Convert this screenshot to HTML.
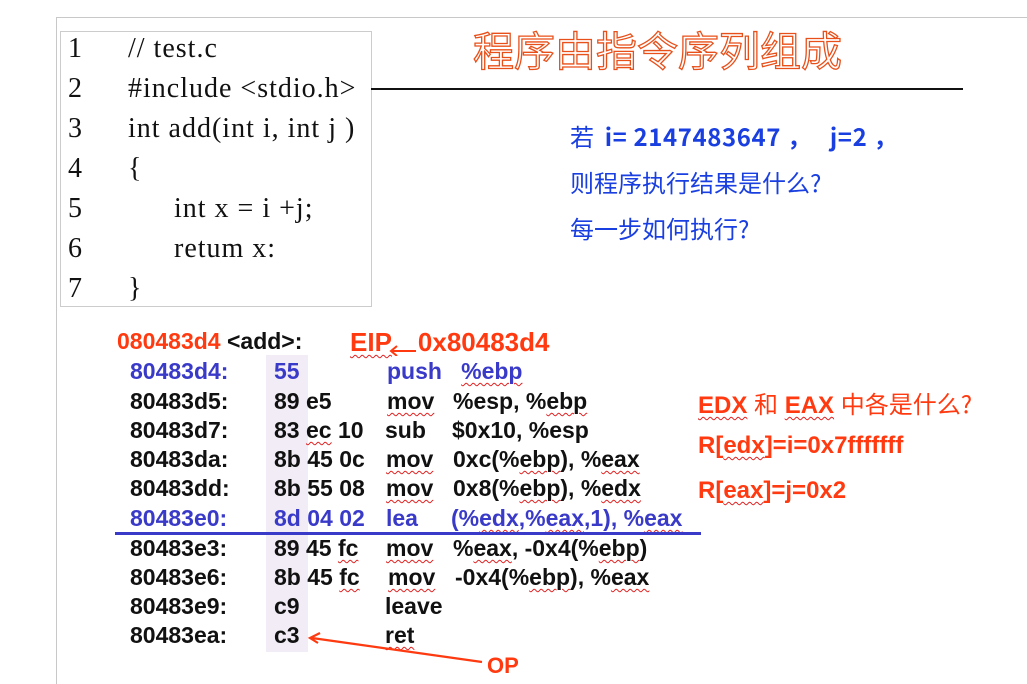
<!DOCTYPE html>
<html><head><meta charset="utf-8"><style>
body{margin:0;width:1027px;height:684px;background:#fff;position:relative;overflow:hidden;font-family:"Liberation Sans","Noto Sans CJK SC",sans-serif}
.a{position:absolute;white-space:nowrap;line-height:1}
.c{font-family:"Liberation Serif",serif;font-size:28px;color:#111;letter-spacing:1px}
.s{font-weight:bold;font-size:23px;color:#111}
.b{color:#3a3ac8}
.w{text-decoration:underline wavy #e02020;text-decoration-thickness:1px;text-underline-offset:3px}
.r{color:#ff3a10;font-weight:bold;font-size:24px}
.q{color:#1a3fe0;font-size:24px;font-family:"Noto Sans CJK SC","Liberation Sans",sans-serif}
</style></head><body>
<div class="a" style="left:56px;top:17px;width:971px;height:1px;background:#c8c8c8"></div>
<div class="a" style="left:56px;top:17px;width:1px;height:667px;background:#c8c8c8"></div>
<div class="a" style="left:60px;top:31px;width:310px;height:274px;border:1px solid #ccc"></div>
<div class="a c" style="left:68px;top:35px">1</div><div class="a c" style="left:128px;top:35px">// test.c</div>
<div class="a c" style="left:68px;top:75px">2</div><div class="a c" style="left:128px;top:75px">#include &lt;stdio.h&gt;</div>
<div class="a c" style="left:68px;top:115px">3</div><div class="a c" style="left:128px;top:115px">int add(int i, int j )</div>
<div class="a c" style="left:68px;top:155px">4</div><div class="a c" style="left:128px;top:155px">{</div>
<div class="a c" style="left:68px;top:195px">5</div><div class="a c" style="left:174px;top:195px">int x = i +j;</div>
<div class="a c" style="left:68px;top:235px">6</div><div class="a c" style="left:174px;top:235px">retum x:</div>
<div class="a c" style="left:68px;top:275px">7</div><div class="a c" style="left:128px;top:275px">}</div>
<div class="a" style="left:473px;top:28px;font-size:41px;font-family:'Noto Sans CJK SC',sans-serif;color:#fff;-webkit-text-stroke:1.3px #e8501a;line-height:1">程序由指令序列组成</div>
<div class="a" style="left:371px;top:88px;width:592px;height:2px;background:#111"></div>
<div class="a q" style="left:570px;top:124px">若 &nbsp;<b style="letter-spacing:0.6px">i= 2147483647 ， &nbsp;&nbsp;j=2 ，</b></div>
<div class="a q" style="left:570px;top:170px">则程序执行结果是什么?</div>
<div class="a q" style="left:570px;top:216px">每一步如何执行?</div>
<div class="a" style="left:266px;top:355px;width:42px;height:297px;background:#f1ecf6"></div>
<div class="a s" style="left:117px;top:330px"><span style="color:#ff3a10">080483d4</span> &lt;add&gt;:</div>
<div class="a r" style="left:350px;top:329px;font-size:26px"><span class="w">EIP</span><span style="display:inline-block;width:26px"></span>0x80483d4</div>
<svg class="a" style="left:388px;top:340px" width="30" height="16"><path d="M28 11H4M9 6L3 11L9 16" stroke="#ff3a10" stroke-width="2" fill="none"/></svg>
<div class="a s b" style="left:130px;top:360px">80483d4:</div><div class="a s b" style="left:274px;top:360px">55</div><div class="a s b" style="left:387px;top:360px">push &nbsp;&nbsp;<span class="w">%ebp</span></div>
<div class="a s" style="left:130px;top:390px">80483d5:</div><div class="a s" style="left:274px;top:390px">89 e5</div><div class="a s" style="left:387px;top:390px"><span class="w">mov</span></div><div class="a s" style="left:453px;top:390px">%esp, %<span class="w">ebp</span></div>
<div class="a s" style="left:130px;top:419px">80483d7:</div><div class="a s" style="left:274px;top:419px">83 <span class="w">ec</span> 10</div><div class="a s" style="left:385px;top:419px">sub</div><div class="a s" style="left:452px;top:419px">$0x10, %esp</div>
<div class="a s" style="left:130px;top:448px">80483da:</div><div class="a s" style="left:274px;top:448px">8b 45 0c</div><div class="a s" style="left:386px;top:448px"><span class="w">mov</span></div><div class="a s" style="left:453px;top:448px">0xc(%<span class="w">ebp</span>), %<span class="w">eax</span></div>
<div class="a s" style="left:130px;top:477px">80483dd:</div><div class="a s" style="left:274px;top:477px">8b 55 08</div><div class="a s" style="left:386px;top:477px"><span class="w">mov</span></div><div class="a s" style="left:453px;top:477px">0x8(%<span class="w">ebp</span>), %<span class="w">edx</span></div>
<div class="a s b" style="left:130px;top:507px">80483e0:</div><div class="a s b" style="left:274px;top:507px">8d 04 02</div><div class="a s b" style="left:386px;top:507px">lea</div><div class="a s b" style="left:451px;top:507px">(%<span class="w">edx</span>,%<span class="w">eax</span>,1), %<span class="w">eax</span></div>
<div class="a" style="left:115px;top:532px;width:586px;height:3px;background:#3a3ac8"></div>
<div class="a s" style="left:130px;top:537px">80483e3:</div><div class="a s" style="left:274px;top:537px">89 45 <span class="w">fc</span></div><div class="a s" style="left:386px;top:537px"><span class="w">mov</span></div><div class="a s" style="left:453px;top:537px">%<span class="w">eax</span>, -0x4(%<span class="w">ebp</span>)</div>
<div class="a s" style="left:130px;top:566px">80483e6:</div><div class="a s" style="left:274px;top:566px">8b 45 <span class="w">fc</span></div><div class="a s" style="left:388px;top:566px"><span class="w">mov</span></div><div class="a s" style="left:455px;top:566px">-0x4(%<span class="w">ebp</span>), %<span class="w">eax</span></div>
<div class="a s" style="left:130px;top:595px">80483e9:</div><div class="a s" style="left:274px;top:595px">c9</div><div class="a s" style="left:385px;top:595px">leave</div>
<div class="a s" style="left:130px;top:624px">80483ea:</div><div class="a s" style="left:274px;top:624px">c3</div><div class="a s" style="left:385px;top:624px"><span class="w">ret</span></div>
<svg class="a" style="left:300px;top:628px" width="190" height="40"><path d="M182 34L12 10M20 5L10 10L18 15" stroke="#ff3a10" stroke-width="2.2" fill="none"/></svg>
<div class="a r" style="left:487px;top:655px;font-size:22px">OP</div>
<div class="a r" style="left:698px;top:391px"><span class="w">EDX</span> <span style="font-weight:normal;font-family:'Noto Sans CJK SC',sans-serif">和</span> <span class="w">EAX</span> <span style="font-weight:normal;font-family:'Noto Sans CJK SC',sans-serif">中各是什么?</span></div>
<div class="a r" style="left:698px;top:434px">R[<span class="w">edx</span>]=i=0x7fffffff</div>
<div class="a r" style="left:698px;top:479px">R[<span class="w">eax</span>]=j=0x2</div>
</body></html>
